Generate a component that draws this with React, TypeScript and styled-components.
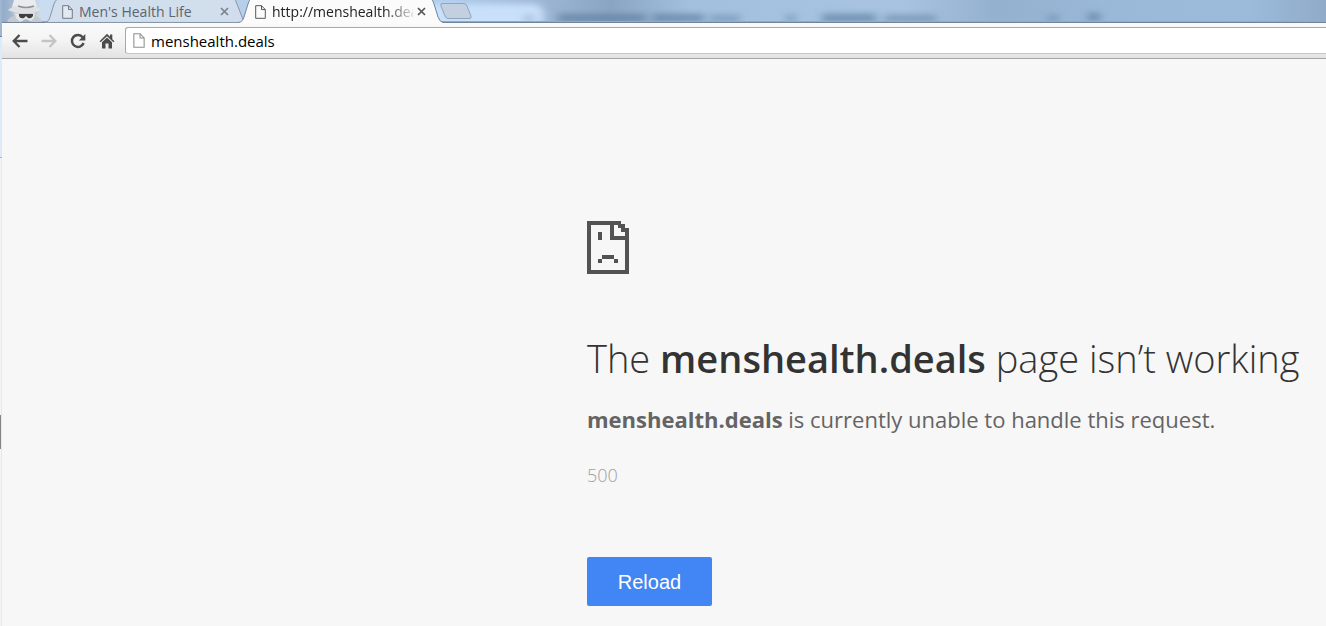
import React from "react";
import styled, { createGlobalStyle } from "styled-components";

const uiFont = `"Open Sans", "Noto Sans", sans-serif`;

const GlobalStyle = createGlobalStyle`
  *, *::before, *::after { box-sizing: border-box; }
  html, body, #root { height: 100%; }
  body { margin: 0; background: #f7f7f7; font-family: ${uiFont}; }
  button, input { font: inherit; color: inherit; margin: 0; padding: 0; border: 0; background: none; }
  svg { display: block; }
`;

const Desktop = styled.div`
  display: grid;
  grid-template-columns: 2px minmax(0, 1fr);
  min-height: 100vh;
`;

const Edge = styled.div`
  display: flex;
  flex-direction: column;
  border-right: 1px solid #e8e8e8;
`;

const EdgePiece = styled.div<{ $height?: number; $color: string }>`
  flex: ${(p) => (p.$height ? `0 0 ${p.$height}px` : "1 1 0")};
  background: ${(p) => p.$color};
  margin-right: -1px;
  &:nth-child(n + 5) { margin-right: 0; }
`;

const Browser = styled.div`
  display: flex;
  flex-direction: column;
  min-width: 0;
`;

const TabStrip = styled.div`
  position: relative;
  display: flex;
  height: 23px;
  overflow: hidden;
  background: #a1bfde;
`;

const Backdrop = styled.svg`
  position: absolute;
  inset: 0;
`;

const Incognito = styled.div`
  position: relative;
  width: 43px;
  flex: none;
`;

const Tab = styled.div<{ $active?: boolean }>`
  position: relative;
  display: flex;
  align-items: center;
  flex: none;
  width: ${(p) => (p.$active ? 205 : 201)}px;
  height: 23px;
  margin-right: ${(p) => (p.$active ? 0 : -8)}px;
  padding: 0 14px 0 17px;
  z-index: ${(p) => (p.$active ? 2 : 1)};
  color: ${(p) => (p.$active ? "#222" : "#5b6570")};
`;

const TabShape = styled.svg`
  position: absolute;
  left: 0;
  top: 0;
`;

const TabTitle = styled.button<{ $fade?: boolean }>`
  position: relative;
  display: flex;
  align-items: center;
  gap: 6px;
  flex: 1;
  min-width: 0;
  height: 22px;
  font-size: 14px;
  line-height: 22px;
  white-space: nowrap;
  overflow: hidden;
  ${(p) => p.$fade && "mask-image: linear-gradient(to right, #000 82%, rgba(0,0,0,.15) 100%);"}
  svg { flex: none; }
`;

const CloseButton = styled.button`
  position: relative;
  flex: none;
  width: 16px;
  height: 22px;
  display: grid;
  place-items: center;
`;

const NewTab = styled.button`
  position: relative;
  flex: none;
  width: 36px;
  height: 22px;
  margin-left: -6px;
  z-index: 3;
`;

const Toolbar = styled.div`
  display: flex;
  align-items: flex-start;
  gap: 5px;
  height: 36px;
  padding: 4px 0 0 6px;
  background: linear-gradient(#fafafa, #f4f4f4 50%, #e3e3e3);
  border-bottom: 1px solid #a5a5a5;
`;

const ToolButton = styled.button`
  flex: none;
  width: 24px;
  height: 27px;
  display: grid;
  place-items: center;
`;

const AddressBar = styled.label`
  display: flex;
  align-items: center;
  gap: 6px;
  flex: 1;
  min-width: 0;
  height: 27px;
  margin-left: 1px;
  padding-left: 7px;
  background: #fff;
  border: 1px solid #a8a8a8;
  border-bottom-color: #c6c6c6;
  border-right: 0;
  border-radius: 3px 0 0 3px;
`;

const AddressInput = styled.input`
  flex: 1;
  min-width: 0;
  height: 24px;
  font-size: 15px;
  color: #000;
  outline: 0;
`;

const Page = styled.main`
  flex: 1;
  display: grid;
  grid-template-columns: minmax(24px, 585px) minmax(680px, 1fr);
  background: #f7f7f7;
`;

const ErrorContent = styled.section`
  grid-column: 2;
  padding: 162px 0 21px;
`;

const Heading = styled.h1`
  margin: 58px 0 0;
  font-size: 38px;
  line-height: 52px;
  font-weight: 300;
  color: #333;
  white-space: nowrap;
  strong { font-weight: 600; }
`;

const Message = styled.p`
  margin: 18px 0 0;
  font-size: 22px;
  line-height: 34px;
  color: #646464;
  white-space: nowrap;
`;

const ErrorCode = styled.div`
  margin-top: 26px;
  font-size: 18px;
  line-height: 26px;
  font-weight: 300;
  color: #a0a0a0;
`;

const ReloadButton = styled.button`
  display: block;
  margin-top: 69px;
  width: 125px;
  height: 49px;
  border-radius: 2px;
  background: #4285f4;
  color: #fff;
  font-family: "Liberation Sans", Arial, sans-serif;
  font-size: 20px;
  line-height: 48px;
`;

function PageIcon({ color, width = 11, height = 14 }: { color: string; width?: number; height?: number }) {
  return (
    <svg width={width} height={height} viewBox="0 0 11 14" fill="#fff" fillOpacity=".35" stroke={color} aria-hidden="true">
      <path d="M.7.7h5.8l3.8 3.9v8.7H.7zM6.5.7v3.9h3.8" />
    </svg>
  );
}

function CloseIcon({ color }: { color: string }) {
  return (
    <svg width="9" height="9" viewBox="0 0 9 9" stroke={color} strokeWidth="1.7" aria-hidden="true">
      <path d="M1 1l7 7M8 1L1 8" />
    </svg>
  );
}

function GlassBackdrop() {
  return (
    <Backdrop width="1324" height="23" aria-hidden="true">
      <defs>
        <linearGradient id="glass">
          <stop offset="0" stopColor="#94acc8" />
          <stop offset=".03" stopColor="#cbdcf0" />
          <stop offset=".2" stopColor="#b4cde9" />
          <stop offset=".34" stopColor="#aecbea" />
          <stop offset=".41" stopColor="#9bb5d2" />
          <stop offset=".46" stopColor="#8aa5c4" />
          <stop offset=".52" stopColor="#a3c1df" />
          <stop offset=".68" stopColor="#a7c3e1" />
          <stop offset=".75" stopColor="#94b1cf" />
          <stop offset=".84" stopColor="#9ab8d8" />
          <stop offset=".94" stopColor="#9cbbdb" />
          <stop offset="1" stopColor="#8fabc8" />
        </linearGradient>
        <filter id="soft" x="-20%" y="-100%" width="140%" height="300%">
          <feGaussianBlur stdDeviation="4 3" />
        </filter>
      </defs>
      <rect width="1324" height="23" fill="url(#glass)" />
      <g filter="url(#soft)">
        <rect x="420" y="4" width="122" height="24" rx="10" fill="#c9e0fa" />
        <g fill="#607f9f" opacity=".75">
          <rect x="522" y="15" width="10" height="7" opacity=".5" />
          <rect x="556" y="14" width="88" height="8" />
          <rect x="650" y="14" width="52" height="8" />
          <rect x="708" y="15" width="30" height="7" opacity=".7" />
          <rect x="784" y="15" width="10" height="7" opacity=".7" />
          <rect x="820" y="14" width="54" height="8" />
          <rect x="882" y="15" width="52" height="7" opacity=".8" />
          <rect x="1046" y="15" width="10" height="7" opacity=".7" />
          <rect x="1086" y="13" width="12" height="8" />
        </g>
      </g>
      <path d="M0 21.5H1324" stroke="#91abc7" />
      <path d="M0 22.5H1324" stroke="#71849a" />
    </Backdrop>
  );
}

function SpyIcon() {
  return (
    <svg width="43" height="22" viewBox="0 0 43 22" aria-hidden="true">
      <path d="M5 22Q7 17 12 16L10 12 6 10Q10 8 13 7L15 0H30L33 7Q38 8 39 10L35 13 34 16Q39 18 40 22Z" fill="#c5c9ce" />
      <path d="M12 0H33L35 7Q24 11 10 7Z" fill="#e9ebee" />
      <path d="M6 10Q10 7 13 6Q24 10 33 6Q38 8 40 10Q24 17 6 10Z" fill="#dde0e4" />
      <path d="M13 13Q23 16 33 13L32 18 28 22H18L14 18Z" fill="#e4e5e7" />
      <path d="M17 14H31V16Q29 19 26 18L24 16 22 18Q18 19 17 16Z" fill="#3c3f43" />
      <path d="M16 6Q24 9 32 6" fill="none" stroke="#8e949b" strokeWidth="1.4" />
      <path d="M18 22L24 19 30 22" fill="#aeb2b7" />
    </svg>
  );
}

function SadPageIcon() {
  return (
    <svg width="42" height="53" viewBox="0 0 42 53" role="img" aria-label="Page error" shapeRendering="crispEdges">
      <path
        fill="#535353"
        fillRule="evenodd"
        d="M0 0H34V3H38V7H42V53H0ZM4 4V49H38V19H23V4ZM27 4V15H38V11H34V7H31V4Z M11 11H15V19H11Z M15 34H27V38H15Z M11 38H15V42H11Z M27 38H31V42H27Z"
      />
    </svg>
  );
}

export default function App() {
  return (
    <Desktop>
      <GlobalStyle />
      <Edge aria-hidden="true">
        <EdgePiece $height={36} $color="#9fb6d0" />
        <EdgePiece $height={1} $color="#66829f" />
        <EdgePiece $height={120} $color="#dceafa" />
        <EdgePiece $height={1} $color="#a1b9d2" />
        <EdgePiece $height={257} $color="#f5f5f5" />
        <EdgePiece $height={34} $color="#858585" />
        <EdgePiece $color="#f5f5f5" />
      </Edge>
      <Browser>
        <TabStrip>
          <GlassBackdrop />
          <Incognito>
            <SpyIcon />
          </Incognito>
          <Tab>
            <TabShape width="201" height="23" aria-hidden="true">
              <path d="M0 22.5C3 22 4 20 5 17L9 4Q10 0 13 -1H189Q191 0 192 4L197 17Q198 22 201 22.5Z" fill="#d3deeb" fillOpacity=".92" stroke="#8797aa" />
            </TabShape>
            <TabTitle type="button">
              <PageIcon color="#737b84" />
              Men's Health Life
            </TabTitle>
            <CloseButton type="button" aria-label="Close Men's Health Life">
              <CloseIcon color="#7b838c" />
            </CloseButton>
          </Tab>
          <Tab $active>
            <TabShape width="205" height="23" aria-hidden="true">
              <path d="M0 23C4 22 5 20 6 17L10 4Q11 0 13 -1H193Q195 0 196 4L200 17Q202 22 205 22.5V23Z" fill="#fbfbfb" />
              <path d="M0 22.5C4 22 5 20 6 17L10 4Q11 0 13 -1M193 -1Q195 0 196 4L200 17Q202 22 205 22.5" fill="none" stroke="#74869b" />
            </TabShape>
            <TabTitle type="button" $fade>
              <PageIcon color="#555" />
              http://menshealth.deals
            </TabTitle>
            <CloseButton type="button" aria-label="Close menshealth.deals">
              <CloseIcon color="#555" />
            </CloseButton>
          </Tab>
          <NewTab type="button" aria-label="New tab">
            <svg width="36" height="22" aria-hidden="true">
              <path d="M5 3.5H27Q29 3.5 30 6L34 16Q35 18.500 32 18.500H11Q9 18.500 8 16L4 6Q3 3.500 5 3.500Z" fill="#c2d0df" stroke="#8fa5be" />
            </svg>
          </NewTab>
        </TabStrip>
        <Toolbar>
          <ToolButton type="button" aria-label="Back">
            <svg width="16" height="14" viewBox="0 0 16 14" fill="none" stroke="#4b4b4b" strokeWidth="2.3">
              <path d="M15.500 7H2M7.500 1L1.700 7l5.800 6" />
            </svg>
          </ToolButton>
          <ToolButton type="button" aria-label="Forward">
            <svg width="16" height="14" viewBox="0 0 16 14" fill="none" stroke="#c4c4c4" strokeWidth="2.3">
              <path d="M.5 7H14M8.500 1l5.800 6-5.800 6" />
            </svg>
          </ToolButton>
          <ToolButton type="button" aria-label="Reload this page">
            <svg width="16" height="16" viewBox="0 0 16 16">
              <path d="M12.700 4.200A6 6 0 1 0 13.600 10" fill="none" stroke="#4b4b4b" strokeWidth="2.500" />
              <path d="M15.300 1V7.500H8.800Z" fill="#4b4b4b" />
            </svg>
          </ToolButton>
          <ToolButton type="button" aria-label="Home">
            <svg width="16" height="16" viewBox="0 0 16 16" fill="#4b4b4b">
              <path d="M8 .8L.6 8.300 1.600 9.300 8 3.200 14.400 9.300 15.400 8.300 13.300 6.200V1.500H11V3.800ZM3 9.200L8 4.500 13 9.200V15.500H9.500V10.500H6.500V15.500H3Z" />
            </svg>
          </ToolButton>
          <AddressBar>
            <PageIcon color="#8f8f8f" width={12} height={15} />
            <AddressInput type="text" aria-label="Address" defaultValue="menshealth.deals" spellCheck={false} />
          </AddressBar>
        </Toolbar>
        <Page>
          <ErrorContent>
            <SadPageIcon />
            <Heading>
              The <strong>menshealth.deals</strong> page isn’t working
            </Heading>
            <Message>
              <strong>menshealth.deals</strong> is currently unable to handle this request.
            </Message>
            <ErrorCode>500</ErrorCode>
            <ReloadButton type="button">Reload</ReloadButton>
          </ErrorContent>
        </Page>
      </Browser>
    </Desktop>
  );
}
